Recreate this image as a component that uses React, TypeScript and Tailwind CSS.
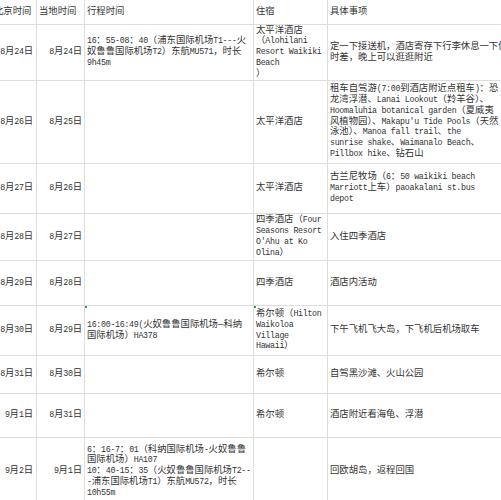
import React from 'react';

interface Row {
  bj: string;
  local: string;
  trip: string[];
  hotel: string[];
  note: string[];
  height: string;
  marks?: boolean;
}

const rows: Row[] = [
  {
    bj: '8月24日',
    local: '8月24日',
    trip: ['16：55-08：40（浦东国际机场T1---火', '奴鲁鲁国际机场T2）东航MU571，时长', '9h45m'],
    hotel: ['太平洋酒店', '（Alohilani', 'Resort Waikiki', 'Beach', '）'],
    note: ['定一下接送机，酒店寄存下行李休息一下倒', '时差，晚上可以逛逛附近'],
    height: 'h-[56px]',
  },
  {
    bj: '8月26日',
    local: '8月25日',
    trip: [],
    hotel: ['太平洋酒店'],
    note: [
      '租车自驾游(7:00到酒店附近点租车)：恐',
      '龙湾浮潜、Lanai Lookout（羚羊谷）、',
      'Hoomaluhia botanical garden（夏威夷',
      "风植物园）、Makapu'u Tide Pools（天然",
      '泳池）、Manoa fall trail、the',
      'sunrise shake、Waimanalo Beach、',
      'Pillbox hike、钻石山',
    ],
    height: 'h-[83px]',
  },
  {
    bj: '8月27日',
    local: '8月26日',
    trip: [],
    hotel: ['太平洋酒店'],
    note: ['古兰尼牧场（6：50 waikiki beach', 'Marriott上车）paoakalani st.bus', 'depot'],
    height: 'h-[50px]',
  },
  {
    bj: '8月28日',
    local: '8月27日',
    trip: [],
    hotel: ['四季酒店（Four', 'Seasons Resort', "O'Ahu at Ko", 'Olina）'],
    note: ['入住四季酒店'],
    height: 'h-[47px]',
  },
  {
    bj: '8月29日',
    local: '8月28日',
    trip: [],
    hotel: ['四季酒店'],
    note: ['酒店内活动'],
    height: 'h-[45px]',
  },
  {
    bj: '8月30日',
    local: '8月29日',
    trip: ['16:00-16:49(火奴鲁鲁国际机场—科纳', '国际机场）HA378'],
    hotel: ['希尔顿（Hilton', 'Waikoloa', 'Village', 'Hawaii）'],
    note: ['下午飞机飞大岛，下飞机后机场取车'],
    height: 'h-[50px]',
    marks: true,
  },
  {
    bj: '8月31日',
    local: '8月30日',
    trip: [],
    hotel: ['希尔顿'],
    note: ['自驾黑沙滩、火山公园'],
    height: 'h-[38px]',
  },
  {
    bj: '9月1日',
    local: '8月31日',
    trip: [],
    hotel: ['希尔顿'],
    note: ['酒店附近看海龟、浮潜'],
    height: 'h-[44px]',
  },
  {
    bj: '9月2日',
    local: '9月1日',
    trip: [
      '6：16-7：01（科纳国际机场-火奴鲁鲁',
      '国际机场）HA107',
      '10：40-15：35（火奴鲁鲁国际机场T2--',
      '-浦东国际机场T1）东航MU572，时长',
      '10h55m',
    ],
    hotel: [],
    note: ['回欧胡岛，返程回国'],
    height: 'h-[68px]',
  },
];

// latin runs get a narrower mono face so they sit at half the CJK width
const mix = (s: string) =>
  s.split(/([\x20-\x7e]+)/).map((part, i) =>
    /^[\x20-\x7e]+$/.test(part) ? (
      <span key={i} className="text-[8.3px] tracking-[-0.3px]">
        {part}
      </span>
    ) : (
      part
    )
  );

const Lines = ({ lines }: { lines: string[] }) => (
  <div>
    {lines.map((l, i) => (
      <div key={i} className="whitespace-nowrap">
        {mix(l)}
      </div>
    ))}
  </div>
);

const cols = 'grid grid-cols-[45px_48px_169px_74px_230px]';
const cell = 'flex items-center border-r border-[#dedede] overflow-visible';

export default function App() {
  return (
    <div
      className="w-[501px] h-[500px] overflow-hidden bg-white text-[#333] text-[9.35px] leading-[10.8px]"
      style={{ fontFamily: '"Liberation Mono", "Noto Sans CJK SC", monospace' }}
    >
      <div className="ml-[-8px] w-[570px]">
        <div className={`${cols} h-[25px] border-b border-[#dedede]`}>
          <div className={`${cell} pl-[2px]`}>北京时间</div>
          <div className={`${cell} pl-[2px]`}>当地时间</div>
          <div className={`${cell} pl-[2px]`}>行程时间</div>
          <div className={`${cell} pl-[2px]`}>住宿</div>
          <div className={`${cell} pl-[2px] border-r-0`}>具体事项</div>
        </div>

        {rows.map((r) => (
          <div key={r.bj} className={`${cols} ${r.height} border-b border-[#dedede]`}>
            <div className={`${cell} justify-end pr-[3px]`}>{mix(r.bj)}</div>
            <div className={`${cell} justify-end pr-[2px]`}>{mix(r.local)}</div>
            <div className={`${cell} relative pl-[2px]`}>
              {r.marks && <span className="absolute left-0 top-0 w-[2px] h-[2px] bg-[#2e9e3e]" />}
              <Lines lines={r.trip} />
            </div>
            <div className={`${cell} relative pl-[2px]`}>
              {r.marks && <span className="absolute left-0 top-0 w-[2px] h-[2px] bg-[#2e9e3e]" />}
              <Lines lines={r.hotel} />
            </div>
            <div className={`${cell} pl-[2px] border-r-0`}>
              <Lines lines={r.note} />
            </div>
          </div>
        ))}
      </div>
    </div>
  );
}
